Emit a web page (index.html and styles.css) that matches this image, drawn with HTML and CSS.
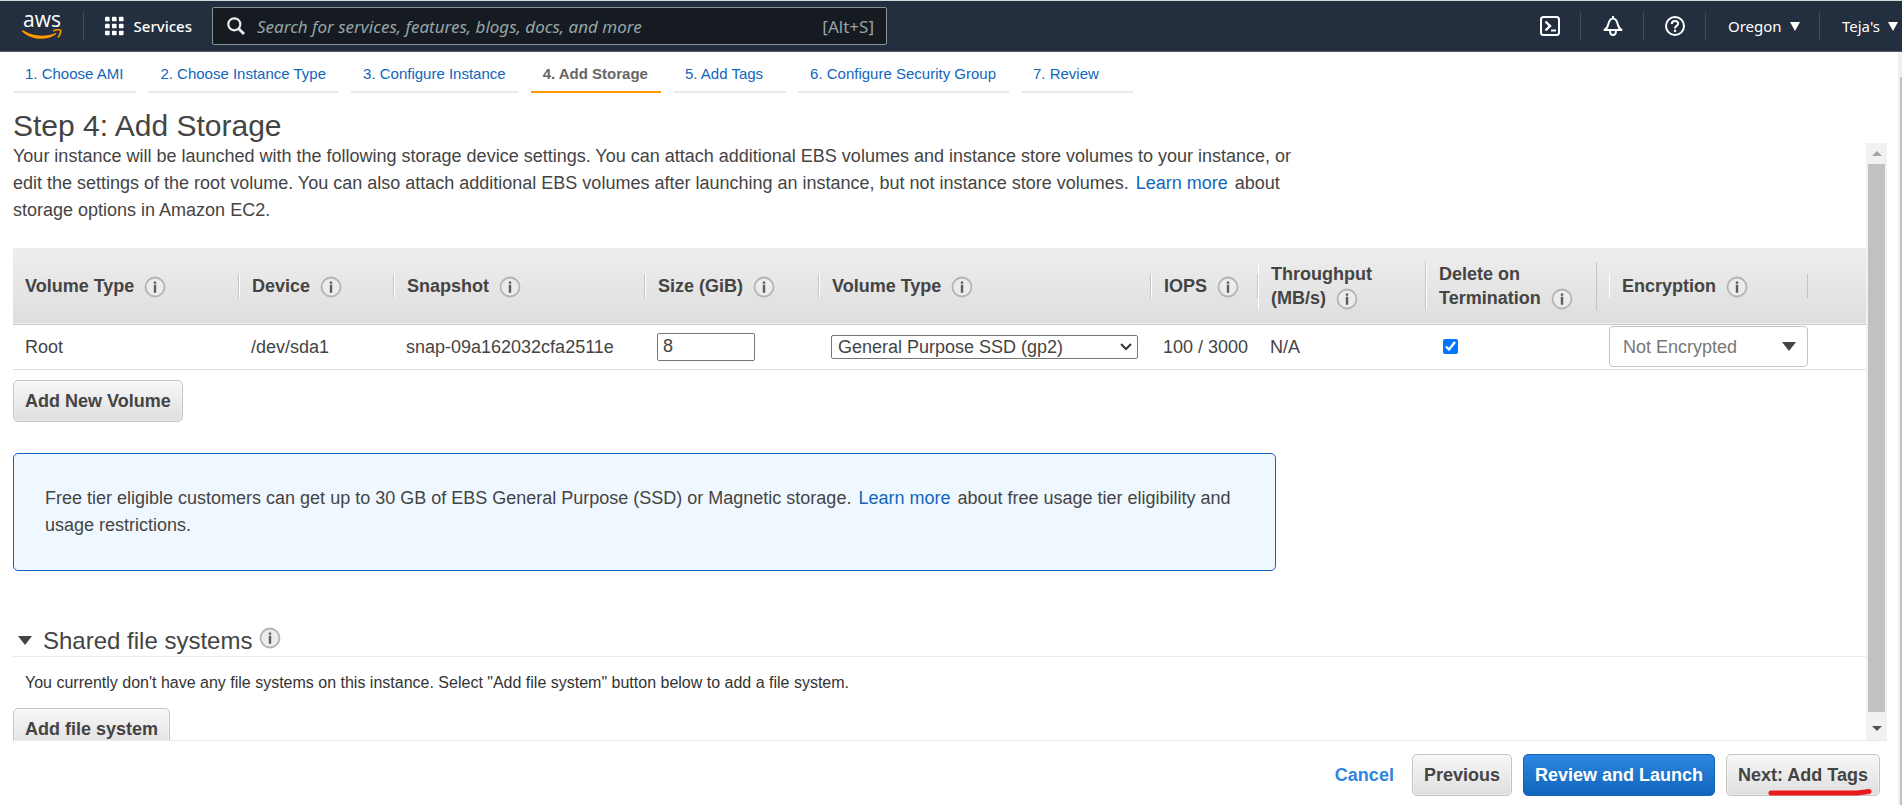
FILE: index.html
```html
<!DOCTYPE html>
<html lang="en">
<head>
<meta charset="utf-8">
<title>Step 4: Add Storage</title>
<link rel="stylesheet" href="styles.css">
</head>
<body>
<svg class="defs" aria-hidden="true">
  <symbol id="info" viewBox="0 0 22 22">
    <circle cx="11" cy="11" r="9.500" fill="#ececec" stroke="#b4b4b4" stroke-width="1.800"/>
    <path d="M9.800 5.500h2.400v2.200H9.800zM9.800 8.700h2.400v8H9.800z" fill="#5c5c5c"/>
  </symbol>
  <symbol id="caret" viewBox="0 0 14 9"><path d="M0 0h14L7 9z" fill="currentColor"/></symbol>
</svg>

<header class="topbar">
  <a class="logo" href="#" aria-label="AWS home">
    <svg width="42" height="30" viewBox="0 0 42 30">
      <text x="21" y="16" text-anchor="middle" class="logo-text">aws</text>
      <path d="M1 19.500c1-.2 1.500 0 2 .3 9 5.700 22 6.400 31.500 2.200.8-.2 1.300.5.500 1.200C26 30 10.500 29.500 1 20.500z" fill="#ff9900"/>
      <path d="M32.300 19.900c3-1.500 6.800-1.400 7.300-.6.500 1.200-.5 5-2.600 7" fill="none" stroke="#ff9900" stroke-width="1.700"/>
    </svg>
  </a>
  <span class="rule"></span>
  <button class="services" type="button">
    <svg width="20" height="20" viewBox="0 0 20 20" fill="#fff"><rect width="5" height="5" rx="1"/><rect x="7.500" width="5" height="5" rx="1"/><rect x="15" width="5" height="5" rx="1"/><rect y="7.500" width="5" height="5" rx="1"/><rect x="7.500" y="7.500" width="5" height="5" rx="1"/><rect x="15" y="7.500" width="5" height="5" rx="1"/><rect y="15" width="5" height="5" rx="1"/><rect x="7.500" y="15" width="5" height="5" rx="1"/><rect x="15" y="15" width="5" height="5" rx="1"/></svg>
    <span>Services</span>
  </button>
  <label class="search">
    <svg width="18" height="18" viewBox="0 0 18 18" fill="none" stroke="#eaeded" stroke-width="2.200"><circle cx="7.300" cy="7.300" r="6"/><path d="M11.700 11.700l5.300 5.300" stroke-width="2.800"/></svg>
    <input type="text" aria-label="Search" placeholder="Search for services, features, blogs, docs, and more">
    <span class="shortcut">[Alt+S]</span>
  </label>
  <div class="tools">
    <button type="button" class="tool cloudshell" aria-label="CloudShell">
      <svg width="20" height="20" viewBox="0 0 20 20" fill="none" stroke="#fff" stroke-width="2"><rect x="1" y="1" width="18" height="18" rx="2.500"/><path d="M5.500 5.500l4.500 4.500-4.500 4.500" stroke-width="2.400"/><path d="M11 14.500h5"/></svg>
    </button>
    <button type="button" class="tool bell" aria-label="Notifications">
      <svg width="20" height="20" viewBox="0 0 20 20" fill="none" stroke="#fff" stroke-width="2" stroke-linejoin="round"><path d="M10 0v2M1.500 14h17c-2.300-1.200-3-2.500-3.700-5.500C14 5 13 2.500 10 2.500S6 5 5.200 8.500c-.7 3-1.400 4.300-3.700 5.500z"/><path d="M7 14.500c0 6 6 6 6 0"/></svg>
    </button>
    <button type="button" class="tool help" aria-label="Help">
      <svg width="20" height="20" viewBox="0 0 20 20" fill="none" stroke="#fff" stroke-width="2"><circle cx="10" cy="10" r="9"/><path d="M6.800 8c0-4 6.400-4 6.400-.4 0 2.400-3.200 2.200-3.200 4.800"/><path d="M10 13.700v2.200" stroke-width="2.200"/></svg>
    </button>
    <button type="button" class="tool region">Oregon <svg width="10" height="9"><path d="M0 0h10L5 9z" fill="#fff"/></svg></button>
    <button type="button" class="tool account">Teja's <svg width="10" height="9"><path d="M0 0h10L5 9z" fill="#fff"/></svg></button>
  </div>
</header>

<div class="page">
  <main class="wizard">
    <nav class="steps">
      <a href="#">1. Choose AMI</a>
      <a href="#">2. Choose Instance Type</a>
      <a href="#">3. Configure Instance</a>
      <a href="#" class="current" aria-current="step">4. Add Storage</a>
      <a href="#" class="mid">5. Add Tags</a>
      <a href="#">6. Configure Security Group</a>
      <a href="#" class="last">7. Review</a>
    </nav>
    <h1>Step 4: Add Storage</h1>
    <div class="viewport">
      <div class="content">
        <p class="intro">Your instance will be launched with the following storage device settings. You can attach additional EBS volumes and instance store volumes to your instance, or edit the settings of the root volume. You can also attach additional EBS volumes after launching an instance, but not instance store volumes. <a href="#">Learn more</a> about storage options in Amazon EC2.</p>

        <table class="volumes">
          <colgroup><col class="c-type"><col class="c-device"><col class="c-snap"><col class="c-size"><col class="c-vol"><col class="c-iops"><col class="c-thr"><col class="c-del"><col class="c-enc"><col></colgroup>
          <thead>
            <tr>
              <th><div class="head">Volume Type <svg class="info"><use href="#info"/></svg></div></th>
              <th><div class="head">Device <svg class="info"><use href="#info"/></svg></div></th>
              <th><div class="head">Snapshot <svg class="info"><use href="#info"/></svg></div></th>
              <th><div class="head">Size (GiB) <svg class="info"><use href="#info"/></svg></div></th>
              <th><div class="head">Volume Type <svg class="info"><use href="#info"/></svg></div></th>
              <th><div class="head">IOPS <svg class="info"><use href="#info"/></svg></div></th>
              <th><div class="head">Throughput<br>(MB/s) <svg class="info"><use href="#info"/></svg></div></th>
              <th><div class="head">Delete on<br>Termination <svg class="info"><use href="#info"/></svg></div></th>
              <th class="enc"><div class="head">Encryption <svg class="info"><use href="#info"/></svg></div></th>
              <th></th>
            </tr>
          </thead>
          <tbody>
            <tr>
              <td>Root</td>
              <td>/dev/sda1</td>
              <td>snap-09a162032cfa2511e</td>
              <td><input class="size" type="text" value="8" aria-label="Size (GiB)"></td>
              <td><span class="pick"><select aria-label="Volume Type"><option>General Purpose SSD (gp2)</option></select><svg width="12" height="8" viewBox="0 0 12 8" fill="none" stroke="#333" stroke-width="2"><path d="M1 1l5 5 5-5"/></svg></span></td>
              <td>100 / 3000</td>
              <td>N/A</td>
              <td class="del"><input type="checkbox" checked aria-label="Delete on Termination"></td>
              <td class="enc"><span class="pick encrypt"><select aria-label="Encryption"><option>Not Encrypted</option></select><svg width="14" height="9"><use href="#caret"/></svg></span></td>
              <td></td>
            </tr>
          </tbody>
        </table>

        <button type="button" class="btn">Add New Volume</button>

        <div class="notice">Free tier eligible customers can get up to 30 GB of EBS General Purpose (SSD) or Magnetic storage. <a href="#">Learn more</a> about free usage tier eligibility and usage restrictions.</div>

        <h2><svg width="14" height="9"><use href="#caret"/></svg><span>Shared file systems</span><svg class="info"><use href="#info"/></svg></h2>
        <p class="empty">You currently don't have any file systems on this instance. Select "Add file system" button below to add a file system.</p>
        <button type="button" class="btn">Add file system</button>
      </div>
      <div class="scrollbar" aria-hidden="true">
        <svg class="up" width="10" height="5"><path d="M0 5L5 0l5 5z"/></svg>
        <span class="thumb"></span>
        <svg class="down" width="10" height="5"><path d="M0 0h10L5 5z"/></svg>
      </div>
    </div>
    <footer class="actions">
      <a href="#">Cancel</a>
      <button type="button" class="btn">Previous</button>
      <button type="button" class="btn primary">Review and Launch</button>
      <span class="marked">
        <button type="button" class="btn">Next: Add Tags</button>
        <svg class="stroke" width="104" height="8" viewBox="0 0 104 8"><path d="M3 5h86l12-1.500" fill="none" stroke="#e81c1c" stroke-width="5" stroke-linecap="round" stroke-linejoin="round"/></svg>
      </span>
    </footer>
  </main>
  <div class="page-scroll" aria-hidden="true"></div>
</div>
</body>
</html>
```
FILE: styles.css
```css
* { box-sizing: border-box; }
body {
  margin: 0;
  height: 100vh;
  display: flex;
  flex-direction: column;
  overflow: hidden;
  font: 18px/27px "Liberation Sans", Arial, sans-serif;
  color: #444;
  background: #fff;
}
button, input, select { font: inherit; color: inherit; }
a { color: #1166bb; text-decoration: none; }
.defs { display: none; }

/* Top bar */
.topbar {
  flex: none;
  display: flex;
  align-items: center;
  height: 52px;
  border-top: 1px solid #d5dbdb;
  border-bottom: 1px solid #545b64;
  background: #232f3e;
  color: #fff;
  font-family: "Noto Sans", sans-serif;
  font-size: 15px;
}
.logo { margin-left: 21px; height: 30px; }
.logo svg { display: block; overflow: visible; }
.logo-text { font: 500 21px "Open Sans", sans-serif; fill: #fff; }
.rule { width: 1px; height: 28px; margin: 0 21px 0 20px; background: #414d5c; }
.topbar button { display: flex; align-items: center; padding: 0; border: 0; background: none; color: #fff; }
.services { gap: 10px; width: 87px; font-weight: 500; white-space: nowrap; }
.search {
  display: flex;
  align-items: center;
  gap: 12px;
  width: 675px;
  height: 38px;
  margin-left: 20px;
  padding: 0 12px 0 14px;
  border: 1px solid #879596;
  border-radius: 2px;
  background: #161a21;
  color: #95a5a6;
  font-size: 17px;
}
.search svg { flex: none; }
.search input { flex: 1; min-width: 0; padding: 0; border: 0; outline: 0; background: none; font-style: italic; }
.search input::placeholder { color: #95a5a6; opacity: 1; }
.tools { display: flex; align-items: center; height: 28px; margin-left: auto; }
.topbar .tool { height: 28px; gap: 8px; border-left: 1px solid #414d5c; padding-left: 22px; white-space: nowrap; }
.topbar .cloudshell { border-left: 0; width: 40px; padding-left: 0; }
.topbar .bell { width: 63px; }
.topbar .help { width: 62px; padding-left: 21px; }
.topbar .region { width: 114px; }
.topbar .account { width: 83px; }

/* Page frame */
.page { flex: 1; min-height: 0; display: flex; }
.wizard { flex: 1; min-width: 0; display: flex; flex-direction: column; padding: 0 11px 0 13px; }
.page-scroll { width: 4px; border-top: 25px solid #f1f1f1; border-left: 2px solid #f1f1f1; background: #c1c1c1; }

/* Wizard steps */
.steps { display: flex; gap: 12px; font-size: 15px; line-height: 20px; }
.steps a { padding: 12px 13px 7px 12px; border-bottom: 2px solid #eaeaea; }
.steps .current { border-color: #ff9900; color: #666; font-weight: bold; }
.steps .mid { padding-right: 23px; }
.steps .last { width: 112px; }
h1 { margin: 15px 0 0; font-size: 30px; line-height: 35px; font-weight: normal; }

/* Scrolling area */
.viewport { flex: 1; min-height: 0; display: flex; border-bottom: 1px solid #eaeaea; }
.content { flex: 1; min-width: 0; overflow: hidden; }
.scrollbar {
  flex: none;
  width: 21px;
  display: flex;
  flex-direction: column;
  align-items: center;
  background: #f1f1f1;
}
.scrollbar .up { margin: 8px 0; fill: #a3a3a3; flex: none; }
.scrollbar .down { margin: 14px 0 9px; fill: #505050; flex: none; }
.thumb { flex: 1; width: 17px; background: #c1c1c1; }

.intro { max-width: 1290px; margin: 0; }
.intro a, .notice a { margin: 0 2px; }

/* Volumes table */
.volumes { width: 100%; margin: 24px 0 10px; table-layout: fixed; border-collapse: collapse; line-height: 24px; }
.c-type { width: 226px; }
.c-device { width: 155px; }
.c-snap { width: 251px; }
.c-size { width: 174px; }
.c-vol { width: 332px; }
.c-iops { width: 107px; }
.c-thr { width: 168px; }
.c-del { width: 171px; }
.c-enc { width: 211px; }
.volumes thead tr { height: 76px; background: linear-gradient(#eee, #dedede); border-bottom: 1px solid #c8c8c8; }
.volumes th { padding: 0; text-align: left; }
.volumes th.enc, .volumes td.enc { padding-left: 12px; }
.head { padding-left: 12px; border-left: 1px solid #fff; border-right: 1px solid #c4c4c4; white-space: nowrap; }
th:first-child .head { border-left: 0; }
.info { width: 22px; height: 22px; margin-left: 5px; vertical-align: -6px; }
.volumes tbody tr { height: 45px; border-bottom: 1px solid #ddd; }
.volumes td { padding: 0 0 0 12px; white-space: nowrap; }
.volumes td.del { padding-left: 17px; }
.volumes input, .volumes select { display: block; margin: 0; }
.size { width: 98px; height: 28px; padding: 0 5px; border: 1px solid #767676; border-radius: 2px; }
.pick { position: relative; display: block; width: 307px; color: #444; }
.pick select { width: 100%; height: 24px; padding: 0 6px; border: 1px solid #767676; border-radius: 2px; background: #fff; appearance: none; line-height: 22px; }
.pick svg { position: absolute; right: 6px; top: 8px; pointer-events: none; }
.encrypt { width: 199px; }
.encrypt select { height: 41px; padding: 0 13px; border-color: #c4c4c4; border-radius: 4px; color: #777; }
.encrypt svg { right: 12px; top: 16px; }
.volumes input[type="checkbox"] { width: 15px; height: 15px; accent-color: #0075ff; }

/* Buttons */
.btn {
  height: 42px;
  padding: 0 11px;
  border: 1px solid #c4c4c4;
  border-radius: 5px;
  background: linear-gradient(#f7f7f7, #dfdfdf);
  box-shadow: inset 0 0 0 1px rgba(255, 255, 255, 0.35);
  font-weight: bold;
  line-height: 24px;
  white-space: nowrap;
}
.btn.primary { border-color: #1166bb; background: linear-gradient(#2e86e0, #1166bb); box-shadow: none; color: #fff; }

.notice {
  max-width: 1263px;
  margin: 31px 0 0;
  padding: 31px;
  border: 1px solid #1166bb;
  border-radius: 5px;
  background: #f0f8ff;
}
h2 {
  display: flex;
  align-items: center;
  margin: 54px 0 0;
  padding-left: 5px;
  border-bottom: 1px solid #eaeaea;
  font-size: 24px;
  line-height: 31px;
  font-weight: normal;
}
h2 span { margin-left: 11px; }
h2 .info { margin: 0 0 5px 7px; }
.empty { margin: 14px 0 13px 12px; font-size: 16px; line-height: 24px; color: #333; }

/* Footer actions */
.actions { display: flex; align-items: center; justify-content: flex-end; gap: 11px; padding: 13px 7px 9px 0; }
.actions a { margin-right: 7px; color: #2e86e0; font-weight: bold; }
.marked { position: relative; }
.marked .btn { display: block; }
.stroke { position: absolute; right: 8px; bottom: 0; }
```
